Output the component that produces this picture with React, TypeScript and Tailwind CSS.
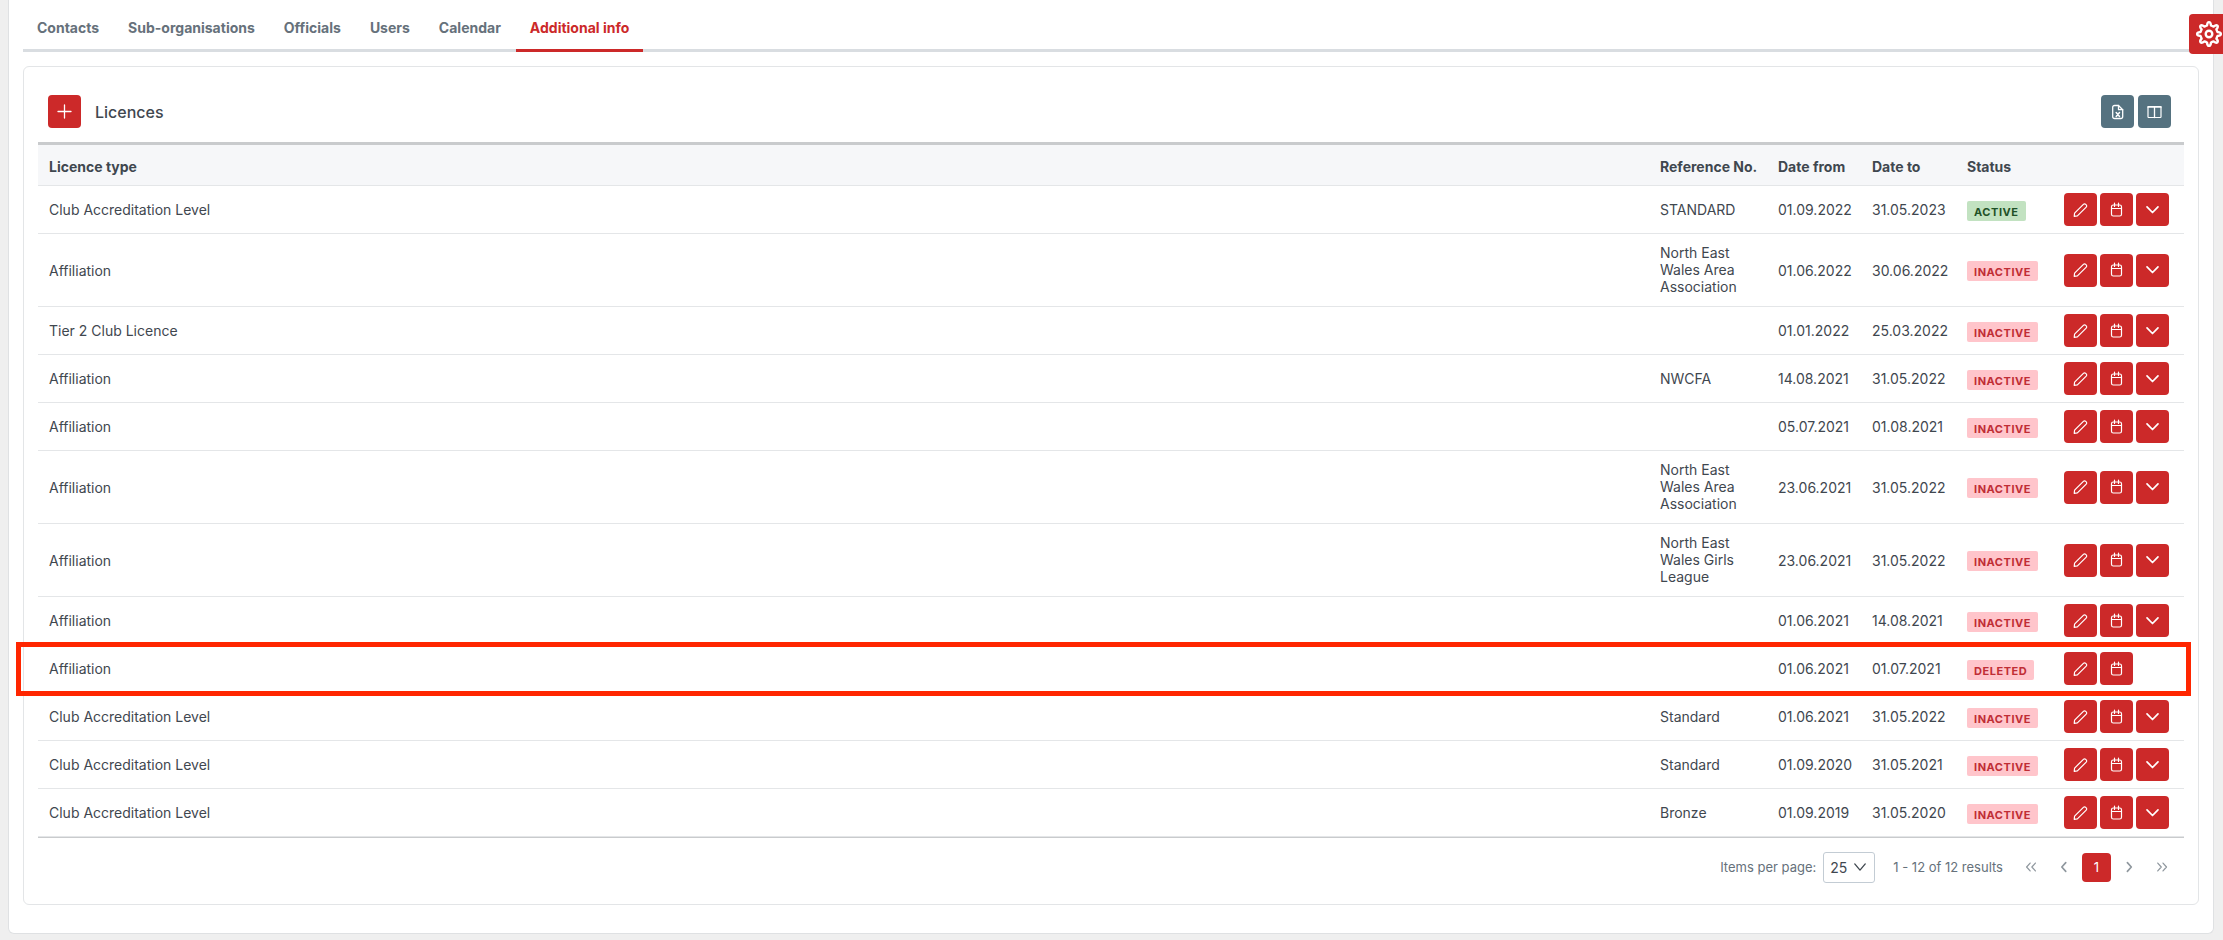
import type { ReactNode } from 'react';

type Licence = {
  type: string;
  reference?: string;
  from: string;
  to: string;
  status: 'ACTIVE' | 'INACTIVE' | 'DELETED';
};

const tabs = ['Contacts', 'Sub-organisations', 'Officials', 'Users', 'Calendar', 'Additional info'];

const licences: Licence[] = [
  { type: 'Club Accreditation Level', reference: 'STANDARD', from: '01.09.2022', to: '31.05.2023', status: 'ACTIVE' },
  { type: 'Affiliation', reference: 'North East Wales Area Association', from: '01.06.2022', to: '30.06.2022', status: 'INACTIVE' },
  { type: 'Tier 2 Club Licence', from: '01.01.2022', to: '25.03.2022', status: 'INACTIVE' },
  { type: 'Affiliation', reference: 'NWCFA', from: '14.08.2021', to: '31.05.2022', status: 'INACTIVE' },
  { type: 'Affiliation', from: '05.07.2021', to: '01.08.2021', status: 'INACTIVE' },
  { type: 'Affiliation', reference: 'North East Wales Area Association', from: '23.06.2021', to: '31.05.2022', status: 'INACTIVE' },
  { type: 'Affiliation', reference: 'North East Wales Girls League', from: '23.06.2021', to: '31.05.2022', status: 'INACTIVE' },
  { type: 'Affiliation', from: '01.06.2021', to: '14.08.2021', status: 'INACTIVE' },
  { type: 'Affiliation', from: '01.06.2021', to: '01.07.2021', status: 'DELETED' },
  { type: 'Club Accreditation Level', reference: 'Standard', from: '01.06.2021', to: '31.05.2022', status: 'INACTIVE' },
  { type: 'Club Accreditation Level', reference: 'Standard', from: '01.09.2020', to: '31.05.2021', status: 'INACTIVE' },
  { type: 'Club Accreditation Level', reference: 'Bronze', from: '01.09.2019', to: '31.05.2020', status: 'INACTIVE' },
];

function Icon({ children, className = 'size-4' }: { children: ReactNode; className?: string }) {
  return (
    <svg
      viewBox="0 0 16 16"
      fill="none"
      stroke="currentColor"
      strokeLinecap="round"
      strokeLinejoin="round"
      aria-hidden="true"
      className={className}
    >
      {children}
    </svg>
  );
}

function PencilIcon() {
  return (
    <Icon>
      <path d="M1.2 14.3l.4-3.2 8.8-8.8a1.6 1.6 0 0 1 2.3 0l.5.5a1.6 1.6 0 0 1 0 2.3l-8.8 8.8z" strokeWidth="1.2" />
    </Icon>
  );
}

function CalendarIcon() {
  return (
    <Icon>
      <rect x="2.5" y="3" width="10" height="11" rx="1.8" strokeWidth="1.2" />
      <path d="M2.5 6.5h10M5.5 1v3.5M9.5 1v3.5" strokeWidth="1.2" />
    </Icon>
  );
}

function ChevronDownIcon() {
  return (
    <Icon>
      <path d="M2 4.8l5.5 5.7L13 4.8" strokeWidth="1.7" />
    </Icon>
  );
}

function PlusIcon() {
  return (
    <Icon>
      <path d="M7.5 1v13M1 7.5h13" strokeWidth="1.3" />
    </Icon>
  );
}

function FileExcelIcon() {
  return (
    <Icon>
      <path d="M8.5 1.5h-4a1.8 1.8 0 0 0-1.8 1.8v9.4a1.8 1.8 0 0 0 1.8 1.8h6.4a1.8 1.8 0 0 0 1.8-1.8V5.7z" strokeWidth="1.3" />
      <path d="M8.5 1.5v4.2h4.2" strokeWidth="1.3" />
      <path d="M6.2 8.5l3.3 4M9.5 8.5l-3.3 4" strokeWidth="1.5" />
    </Icon>
  );
}

function ColumnsIcon() {
  return (
    <Icon>
      <rect x="1" y="2.5" width="13" height="11" rx="0.8" strokeWidth="1.2" />
      <path d="M1 3h13" strokeWidth="1.6" />
      <path d="M7.5 3v10.5" strokeWidth="1.3" />
    </Icon>
  );
}

function GearIcon() {
  return (
    <svg
      viewBox="0 0 28 28"
      fill="none"
      stroke="currentColor"
      strokeWidth="2.4"
      strokeLinejoin="round"
      aria-hidden="true"
      className="size-7 shrink-0"
    >
      <path d="M12 5.5C12.5 1 15.5 1 16 5.5Q17 6 18.6 6.6C22 3.7 24.3 6 21.4 9.4Q22 11 22.5 12C27 12.5 27 15.5 22.5 16Q22 17 21.4 18.6C24.3 22 22 24.3 18.6 21.4Q17 22 16 22.5C15.5 27 12.5 27 12 22.5Q11 22 9.4 21.4C6 24.3 3.7 22 6.6 18.6Q6 17 5.5 16C1 15.5 1 12.5 5.5 12Q6 11 6.6 9.4C3.7 6 6 3.7 9.4 6.6Q11 6 12 5.5z" />
      <circle cx="14" cy="14" r="3.3" />
    </svg>
  );
}

function IconButton({ label, children, color = 'bg-[#cc2929]' }: { label: string; children: ReactNode; color?: string }) {
  return (
    <button
      type="button"
      aria-label={label}
      className={`flex size-[33px] items-center justify-center rounded-sm text-white ${color}`}
    >
      {children}
    </button>
  );
}

function StatusBadge({ status }: { status: Licence['status'] }) {
  const color = status === 'ACTIVE' ? 'bg-[#c2e2c1] text-[#1f5127]' : 'bg-[#ffc5cb] text-[#c02d35]';
  return (
    <span className={`mt-[2px] inline-block h-5 rounded-[2px] px-[7px] pt-px text-[11px] leading-5 font-bold tracking-wider ${color}`}>
      {status}
    </span>
  );
}

function LicenceRow({ licence }: { licence: Licence }) {
  const deleted = licence.status === 'DELETED';
  return (
    <tr className="relative h-12">
      <td className="px-[11px]">
        {licence.type}
        {deleted && (
          <span className="pointer-events-none absolute -top-[3px] -right-[7px] -bottom-[3px] -left-[22px] border-5 border-[#ff2600]" />
        )}
      </td>
      <td className="px-[11px] pt-[10px] pb-[11px]">{licence.reference}</td>
      <td className="px-[11px]">{licence.from}</td>
      <td className="px-[11px]">{licence.to}</td>
      <td className="px-[11px]">
        <div className="flex">
          <StatusBadge status={licence.status} />
        </div>
      </td>
      <td className="px-[11px]">
        <div className="flex gap-[3px]">
          <IconButton label="Edit">
            <PencilIcon />
          </IconButton>
          <IconButton label="Change dates">
            <CalendarIcon />
          </IconButton>
          {!deleted && (
            <IconButton label="More actions">
              <ChevronDownIcon />
            </IconButton>
          )}
        </div>
      </td>
    </tr>
  );
}

function PageButton({ label, children }: { label: string; children: ReactNode }) {
  return (
    <button type="button" aria-label={label} className="flex size-[29px] items-center justify-center pb-[2px] text-[#8f979e]">
      {children}
    </button>
  );
}

function Pagination() {
  return (
    <div className="mt-[14px] flex items-center justify-end pr-[7px] text-[13px] text-[#66717b]">
      <label htmlFor="page-size">Items per page:</label>
      <div className="relative ml-[7px]">
        <select
          id="page-size"
          defaultValue="25"
          className="block h-[31px] w-[52px] appearance-none rounded-[3px] border border-[#c3ccd4] bg-white pl-[6px] text-sm text-[#3f474f]"
        >
          <option>10</option>
          <option>25</option>
          <option>50</option>
        </select>
        <span className="pointer-events-none absolute top-2 right-2 text-[#3f474f]">
          <Icon className="size-[14px]">
            <path d="M2 4.5l6 7 6-7" strokeWidth="1.5" />
          </Icon>
        </span>
      </div>
      <span className="ml-[18px]">1 - 12 of 12 results</span>
      <nav aria-label="Pages" className="ml-[13px] flex gap-1">
        <PageButton label="First page">
          <Icon className="size-[14px]">
            <path d="M7 3.5L3 8l4 4.5M13 3.5L9 8l4 4.5" strokeWidth="1.4" />
          </Icon>
        </PageButton>
        <PageButton label="Previous page">
          <Icon className="size-[14px]">
            <path d="M10 3L5.5 8l4.5 5" strokeWidth="1.9" />
          </Icon>
        </PageButton>
        <button type="button" aria-current="page" className="size-[29px] rounded-sm bg-[#cc2929] text-white">
          1
        </button>
        <PageButton label="Next page">
          <Icon className="size-[14px]">
            <path d="M5 3l4.5 5L5 13" strokeWidth="1.9" />
          </Icon>
        </PageButton>
        <PageButton label="Last page">
          <Icon className="size-[14px]">
            <path d="M2 3.5L6 8l-4 4.5M8 3.5L12 8l-4 4.5" strokeWidth="1.4" />
          </Icon>
        </PageButton>
      </nav>
    </div>
  );
}

export default function App() {
  return (
    <div className="min-h-screen bg-[#efefef] pr-[9px] pl-2 font-['Inter',sans-serif] text-[14px] leading-[17px] text-[#3f474f]">
      <main className="rounded-b-md border border-t-0 border-[#dfe1e3] bg-white px-[14px] pb-7">
        <nav className="flex h-[52px] gap-px border-b-3 border-[#d9dde1] font-bold text-[#66717b]">
          {tabs.map((tab) => (
            <a
              key={tab}
              href="#"
              className={
                tab === 'Additional info'
                  ? 'h-[52px] border-b-3 border-[#cc2929] px-[14px] pt-[19px] text-[#cc2929]'
                  : 'h-[52px] px-[14px] pt-[19px]'
              }
            >
              {tab}
            </a>
          ))}
        </nav>

        <section className="mt-[14px] rounded-md border border-[#e3e5e7] px-[14px] pt-7 pb-[21px]">
          <div className="mb-[14px] flex items-center justify-between pr-[13px] pl-[10px]">
            <div className="flex items-center gap-[14px]">
              <IconButton label="Add licence">
                <PlusIcon />
              </IconButton>
              <h2 className="text-base font-medium">Licences</h2>
            </div>
            <div className="flex gap-1">
              <IconButton label="Export to Excel" color="bg-[#557280]">
                <FileExcelIcon />
              </IconButton>
              <IconButton label="Choose columns" color="bg-[#557280]">
                <ColumnsIcon />
              </IconButton>
            </div>
          </div>

          <div className="border-t-3 border-b border-[#c9cbcd]">
            <table className="w-full table-fixed border-separate border-spacing-0 text-left [&_td]:border-b [&_td]:border-[#e4e6e8]">
              <colgroup>
                <col />
                <col className="w-[118px]" />
                <col className="w-[94px]" />
                <col className="w-[95px]" />
                <col className="w-[97px]" />
                <col className="w-[131px]" />
              </colgroup>
              <thead>
                <tr className="h-[41px] bg-[#f6f7f9] [&>th]:border-b [&>th]:border-[#e4e6e8] [&>th]:px-[11px] [&>th]:pt-[3px] [&>th]:font-bold [&>th]:whitespace-nowrap">
                  <th>Licence type</th>
                  <th>Reference No.</th>
                  <th>Date from</th>
                  <th>Date to</th>
                  <th>Status</th>
                  <th aria-label="Actions" />
                </tr>
              </thead>
              <tbody>
                {licences.map((licence, i) => (
                  <LicenceRow key={i} licence={licence} />
                ))}
              </tbody>
            </table>
          </div>

          <Pagination />
        </section>
      </main>

      <button
        type="button"
        aria-label="Settings"
        className="fixed top-[14px] right-0 flex h-10 w-[34px] items-center rounded-l-sm bg-[#cc2929] pl-[6px] text-white"
      >
        <GearIcon />
      </button>
    </div>
  );
}
